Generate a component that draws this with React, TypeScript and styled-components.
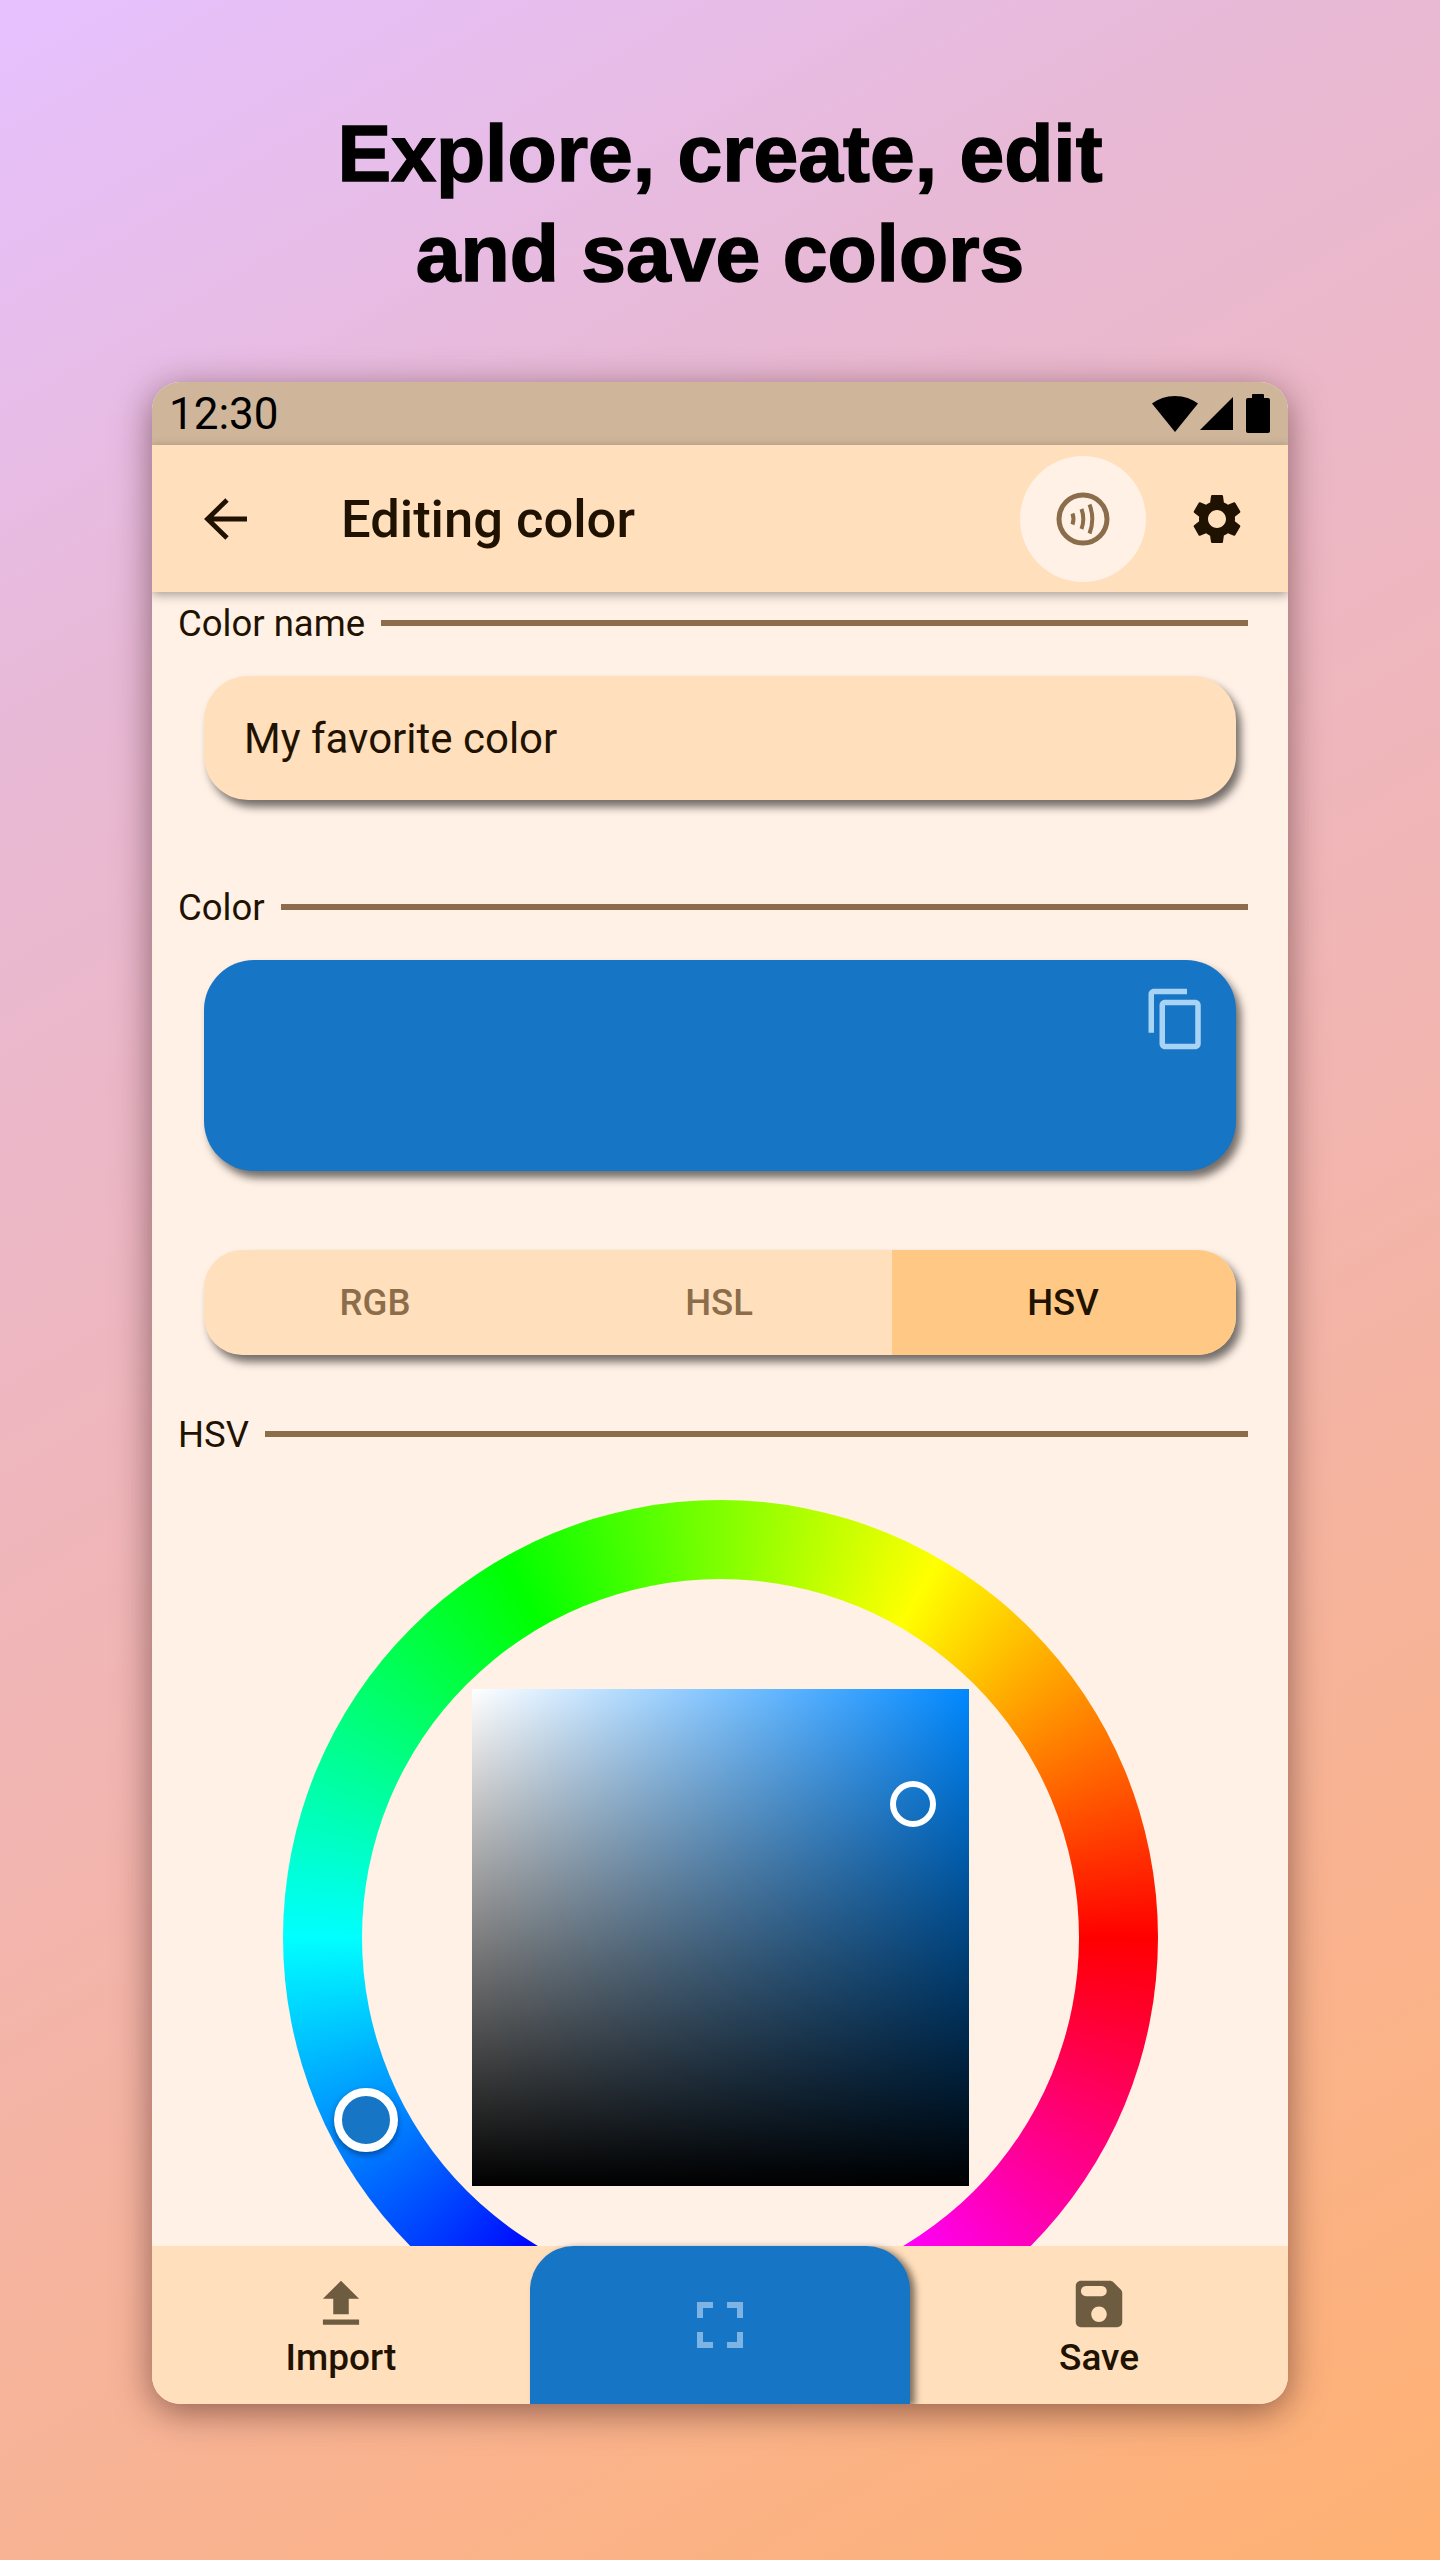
import { createGlobalStyle, styled } from 'styled-components';
import { MdContentCopy, MdFileUpload, MdSettings } from 'react-icons/md';

const Global = createGlobalStyle`
	html, body {
		margin: 0;
		padding: 0;
		background: #ffb070;
	}
	* {
		box-sizing: border-box;
	}
`;

const Page = styled.div`
	width: 1440px;
	height: 2560px;
	overflow: hidden;
	display: flex;
	flex-direction: column;
	align-items: center;
	font-family: Roboto, 'Noto Sans', sans-serif;
	color: #1f1200;
	background: linear-gradient(150deg, #e6c1ff 0%, #e8b9d6 22%, #f2b5b0 55%, #ffb172 100%);
`;

const Headline = styled.h1`
	margin: 0;
	padding-top: 103px;
	height: 382px;
	font-family: 'Liberation Sans', Arial, sans-serif;
	font-size: 80.5px;
	font-weight: 700;
	line-height: 100px;
	text-align: center;
	color: #000;
	-webkit-text-stroke: 1.5px #000;
`;

const Phone = styled.div`
	width: 1136px;
	height: 2022px;
	flex: none;
	display: flex;
	flex-direction: column;
	border-radius: 28px;
	overflow: hidden;
	background: #fff1e6;
	box-shadow: 0 8px 36px rgba(60, 25, 25, 0.55);
`;

const StatusBar = styled.div`
	height: 63px;
	flex: none;
	padding: 0 18px 0 17px;
	display: flex;
	align-items: center;
	justify-content: space-between;
	background: #cfb69b;
	color: #000;
	font-size: 44px;
`;

const StatusIcons = styled.div`
	display: flex;
	align-items: center;
`;

const AppBar = styled.header`
	position: relative;
	z-index: 2;
	height: 147px;
	flex: none;
	display: flex;
	align-items: center;
	padding: 0 41px 0 52px;
	background: #ffdfbc;
	box-shadow: 0 3px 10px rgba(0, 0, 0, 0.35);
`;

const Title = styled.div`
	margin-left: 93px;
	flex: 1;
	font-size: 52.5px;
	font-weight: 500;
`;

const NfcButton = styled.div`
	width: 126px;
	height: 126px;
	border-radius: 50%;
	display: flex;
	align-items: center;
	justify-content: center;
	background: #fff1e6;
`;

const SettingsIcon = styled(MdSettings)`
	width: 60px;
	height: 60px;
	margin-left: 41px;
`;

const Content = styled.main`
	flex: 1;
	min-height: 0;
	overflow: hidden;
	padding: 16px 40px 0 26px;
	display: flex;
	flex-direction: column;
	align-items: stretch;
`;

const SectionLabel = styled.div<{ $gap?: number }>`
	height: 30px;
	flex: none;
	display: flex;
	align-items: center;
	gap: 16px;
	font-size: 36.5px;
	margin-top: ${(p) => p.$gap ?? 0}px;

	&::after {
		content: '';
		flex: 1;
		height: 6px;
		background: #8b6d4b;
	}
`;

const TextField = styled.div`
	margin: 38px 12px 0 26px;
	height: 124px;
	flex: none;
	display: flex;
	align-items: center;
	padding-left: 40px;
	border-radius: 44px;
	background: #ffdfbc;
	font-size: 42px;
	box-shadow: 5px 7px 8px rgba(0, 0, 0, 0.55);
`;

const Swatch = styled.div`
	margin: 38px 12px 0 26px;
	height: 211px;
	flex: none;
	display: flex;
	justify-content: flex-end;
	align-items: flex-start;
	padding: 26px 27px;
	border-radius: 50px;
	background: #1775c6;
	color: #a9d3f5;
	box-shadow: 5px 7px 8px rgba(0, 0, 0, 0.55);
`;

const Tabs = styled.div`
	margin: 79px 12px 0 26px;
	height: 105px;
	flex: none;
	display: grid;
	grid-template-columns: 1fr 1fr 1fr;
	border-radius: 38px;
	background: #ffdfbc;
	box-shadow: 5px 7px 8px rgba(0, 0, 0, 0.55);
`;

const Tab = styled.div<{ $active?: boolean }>`
	display: flex;
	align-items: center;
	justify-content: center;
	padding-right: 2px;
	font-size: 36.5px;
	font-weight: 500;
	color: ${(p) => (p.$active ? '#1f1200' : '#8b6d4b')};
	background: ${(p) => (p.$active ? '#ffc985' : 'transparent')};
	border-radius: ${(p) => (p.$active ? '0 38px 38px 0' : '0')};
`;

const Wheel = styled.div`
	position: relative;
	flex: none;
	margin: 51px 0 0 105px;
	width: 875px;
	height: 875px;
	border-radius: 50%;
	background: conic-gradient(from 90deg, #f00, #f0f, #00f, #0ff, #0f0, #ff0, #f00);

	&::before {
		content: '';
		position: absolute;
		inset: 79px;
		border-radius: 50%;
		background: #fff1e6;
	}
`;

const ColorSquare = styled.div`
	position: absolute;
	left: 188.5px;
	top: 189px;
	width: 497px;
	height: 497px;
	background: linear-gradient(to bottom, transparent, #000), linear-gradient(to right, #fff, #0088ff);
`;

const HueThumb = styled.div`
	position: absolute;
	left: 51px;
	top: 588px;
	width: 64px;
	height: 64px;
	border-radius: 50%;
	border: 8px solid #fff;
	background: #1775c6;
	box-shadow: 0 3px 6px rgba(0, 0, 0, 0.4);
`;

const ValueThumb = styled.div`
	position: absolute;
	left: 607px;
	top: 281px;
	width: 46px;
	height: 46px;
	border-radius: 50%;
	border: 6px solid #fff;
`;

const BottomBar = styled.nav`
	position: relative;
	z-index: 2;
	height: 158px;
	flex: none;
	display: grid;
	grid-template-columns: 378px 380px 378px;
	background: #ffdfbc;
`;

const NavItem = styled.div`
	display: flex;
	flex-direction: column;
	align-items: center;
	padding-top: 27px;
	font-size: 37px;
	font-weight: 500;
	line-height: 42px;
`;

const NavIconBox = styled.div`
	height: 62px;
	margin-bottom: 2px;
	color: #6e5c40;
`;

const ScanButton = styled.div`
	display: flex;
	align-items: center;
	justify-content: center;
	border-radius: 44px 44px 0 0;
	background: #1775c6;
	box-shadow: 5px 2px 7px rgba(0, 0, 0, 0.5);
`;

const SignalSvg = styled.svg`
	margin-left: 2px;
`;

const BatterySvg = styled.svg`
	margin-left: 13px;
`;

const WifiIcon = () => (
	<svg width="46" height="36" viewBox="0 0 46 36">
		<path d="M0 7.5C6 3 14 0 23 0s17 3 23 7.5L23 36z" fill="#000" />
	</svg>
);

const SignalIcon = () => (
	<SignalSvg width="33" height="33" viewBox="0 0 33 33">
		<path d="M33 0v33H0z" fill="#000" />
	</SignalSvg>
);

const BatteryIcon = () => (
	<BatterySvg width="24" height="39" viewBox="0 0 24 39">
		<path d="M7 0h10a1 1 0 0 1 1 1v3h4a2 2 0 0 1 2 2v31a2 2 0 0 1-2 2H2a2 2 0 0 1-2-2V6a2 2 0 0 1 2-2h4V1a1 1 0 0 1 1-1z" fill="#000" />
	</BatterySvg>
);

const BackIcon = () => (
	<svg width="44" height="44" viewBox="0 0 44 44" fill="none" stroke="#1f1200" strokeWidth="4.8">
		<path d="M43 22H4M23 3 3.5 22 23 41" />
	</svg>
);

const ContactlessIcon = () => (
	<svg width="56" height="56" viewBox="0 0 56 56" fill="none" stroke="#8b6d4b">
		<circle cx="28" cy="28" r="24" strokeWidth="5" />
		<g strokeWidth="4">
			<path d="M17.5 22.5q2 5.500 0 11" />
			<path d="M26.500 18q3.600 10 0 20" />
			<path d="M34.500 13.500q5.600 14.500 0 29" />
		</g>
	</svg>
);

const SaveIcon = () => (
	<svg width="62" height="62" viewBox="0 0 24 24" fill="currentColor">
		<path d="M17.59 3.59c-.38-.38-.89-.59-1.42-.59H5c-1.11 0-2 .9-2 2v14c0 1.1.9 2 2 2h14c1.1 0 2-.9 2-2V7.83c0-.53-.21-1.04-.59-1.41l-2.82-2.83zM12 19c-1.66 0-3-1.34-3-3s1.34-3 3-3 3 1.34 3 3-1.34 3-3 3zm1-10H7c-1.1 0-2-.9-2-2s.9-2 2-2h6c1.1 0 2 .9 2 2s-.9 2-2 2z" />
	</svg>
);

const ScanIcon = () => (
	<svg width="46" height="46" viewBox="0 0 46 46" fill="none" stroke="#7db4e6" strokeWidth="6">
		<path d="M3 16V3h13M30 3h13v13M43 30v13H30M16 43H3V30" />
	</svg>
);

export default function App() {
	return (
		<Page>
			<Global />
			<Headline>
				Explore, create, edit
				<br />
				and save colors
			</Headline>
			<Phone>
				<StatusBar>
					<span>12:30</span>
					<StatusIcons>
						<WifiIcon />
						<SignalIcon />
						<BatteryIcon />
					</StatusIcons>
				</StatusBar>
				<AppBar>
					<BackIcon />
					<Title>Editing color</Title>
					<NfcButton>
						<ContactlessIcon />
					</NfcButton>
					<SettingsIcon />
				</AppBar>
				<Content>
					<SectionLabel>Color name</SectionLabel>
					<TextField>My favorite color</TextField>
					<SectionLabel $gap={92}>Color</SectionLabel>
					<Swatch>
						<MdContentCopy size={66} />
					</Swatch>
					<Tabs>
						<Tab>RGB</Tab>
						<Tab>HSL</Tab>
						<Tab $active>HSV</Tab>
					</Tabs>
					<SectionLabel $gap={64}>HSV</SectionLabel>
					<Wheel>
						<ColorSquare />
						<ValueThumb />
						<HueThumb />
					</Wheel>
				</Content>
				<BottomBar>
					<NavItem>
						<NavIconBox>
							<MdFileUpload size={62} />
						</NavIconBox>
						Import
					</NavItem>
					<ScanButton>
						<ScanIcon />
					</ScanButton>
					<NavItem>
						<NavIconBox>
							<SaveIcon />
						</NavIconBox>
						Save
					</NavItem>
				</BottomBar>
			</Phone>
		</Page>
	);
}
